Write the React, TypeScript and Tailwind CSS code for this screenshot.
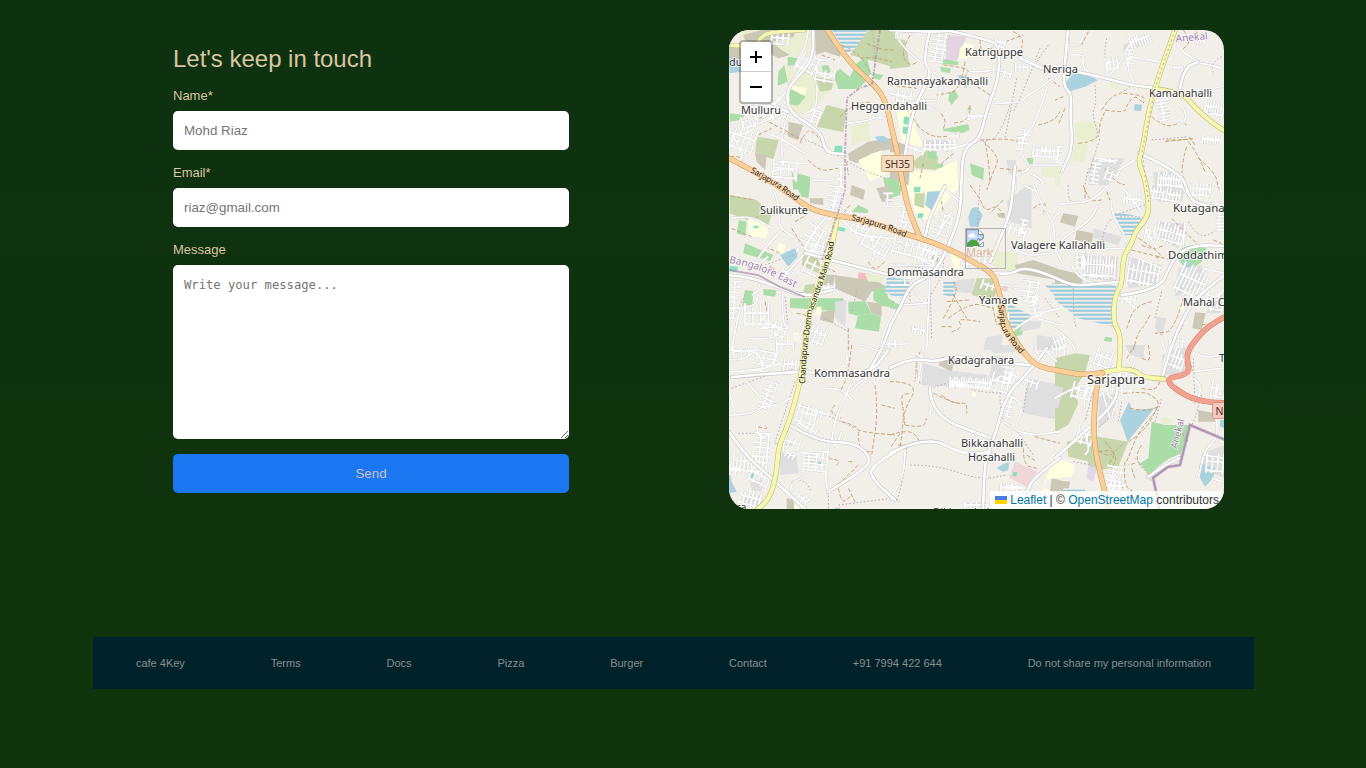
import React from "react";

type Area = [string, string];
type Grid = [number, number, number, number, number, number, number];
type Tile = {
  x: number;
  y: number;
  areas: Area[];
  streets: string[];
  grids: Grid[];
  tracks: string[];
  paths: string[];
};

const WOOD = "#aadda8";
const SCRUB = "#c8d7ab";
const FARM = "#e9efd0";
const YARD = "#cbc8b6";
const WATER = "#aad3df";
const TOWN = "#e0dfdf";
const SCHOOL = "#ffffe0";
const PITCH = "#88e0be";
const WET = "url(#wet)";

// Tile coordinates are three units per map pixel.
const tiles: Tile[] = [
  {
    x: 725, y: 25,
    areas: [
      [FARM, "45,15 260,15 250,95 200,95 150,60 45,60"],
      [YARD, "55,30 110,15 215,15 205,35 140,50 170,75 195,90 160,100 60,45"],
      [YARD, "270,15 300,15 350,70 345,95 300,80 272,90"],
      [WATER, "10,70 45,55 50,140 14,145"],
      [WET, "320,15 425,15 425,50 365,85"],
      [SCRUB, "430,15 510,15 510,128 450,110 375,90"],
      [FARM, "185,120 300,130 330,180 280,240 230,270 190,250"],
      [SCHOOL, "185,180 245,190 240,210 190,205"],
      [WOOD, "160,140 178,120 188,170 158,182"],
      [WOOD, "195,190 242,215 218,242 195,238"],
      [WOOD, "290,122 310,120 318,140 295,148"],
      [WOOD, "325,148 345,132 375,155 395,115 425,95 440,150 400,192 340,192"],
      [WOOD, "448,145 475,150 465,165 445,160"],
      [SCRUB, "270,155 325,165 320,195 285,200"],
      [WOOD, "188,95 222,100 210,120 188,122"],
      [SCRUB, "305,240 365,255 355,322 275,305"],
      [SCRUB, "95,335 162,345 145,402 90,388"],
      [YARD, "190,290 235,300 218,345 190,335"],
      [YARD, "10,60 50,65 55,100 18,110"],
      [WOOD, "14,265 60,270 45,285 14,290"],
      [PITCH, "330,362 352,362 352,383 326,383"],
      [FARM, "378,305 430,290 435,345 380,362"],
      [YARD, "370,385 430,350 505,338 500,372 440,385 395,415 372,405"],
      [SCHOOL, "400,405 470,375 480,450 435,468"],
      [WATER, "448,335 475,332 495,345 465,353"],
      [WOOD, "200,440 255,455 255,485 205,495"],
      [YARD, "90,385 125,390 120,435 95,410"],
      [WOOD, "475,460 510,455 510,480 480,490"],
    ],
    streets: [
      "250,15 245,60 215,110 205,140", "270,90 240,110 190,185", "270,100 300,110 318,100", "270,130 300,165 325,150", "190,190 150,250 90,245",
      "275,180 280,250 240,265", "130,280 190,260", "190,270 165,330 175,420", "90,260 95,300 70,325 20,330", "20,330 60,380 40,420",
      "125,325 160,335 240,385", "160,410 245,415", "140,440 200,420 215,470", "365,295 420,290 450,275 500,285", "435,175 470,215", "260,465 345,470 350,440", "400,140 425,160 440,150",
    ],
    grids: [[165, 42, 50, 40, 5, 4, 4], [250, 115, 50, 60, 30, 4, 4], [95, 280, 90, 40, -20, 5, 3], [50, 340, 80, 80, 20, 6, 5], [180, 435, 70, 60, 5, 4, 3], [265, 280, 40, 50, 20, 3, 4], [300, 150, 55, 45, 10, 3, 3], [135, 235, 70, 70, 35, 4, 4], [350, 455, 25, 60, 0, 2, 4]],
    tracks: ["405,100 440,95 500,110", "425,55 470,75 510,75", "350,60 400,80 440,150", "345,275 380,240 440,230", "100,275 170,310 230,345", "225,355 235,330 260,310 320,390", "250,405 280,440 340,430", "15,395 50,390 50,430", "290,90 330,105", "100,330 140,310", "365,410 370,450"],
    paths: ["165,320 260,345 400,430 480,460", "440,15 455,100 440,180", "90,300 110,260"],
  },
  {
    x: 890, y: 25,
    areas: [
      [SCRUB, "0,40 45,45 60,125 0,132"],
      ["#e3d4e3", "170,30 230,35 200,108 168,105"],
      [SCHOOL, "225,55 250,60 240,95 205,105 210,70"],
      [WOOD, "160,102 205,110 205,120 155,118"],
      [WOOD, "150,125 182,130 180,145 155,140"],
      [WOOD, "178,205 195,195 205,215 185,240 175,225"],
      [WATER, "205,150 235,155 230,190 205,170"],
      [WOOD, "160,312 235,297 238,315 215,325 160,318"],
      [WOOD, "235,245 244,250 242,258 232,254"],
      [SCHOOL, "20,255 60,250 80,320 105,370 35,350"],
      [PITCH, "42,275 58,275 54,300 40,296"],
      [PITCH, "38,305 58,305 56,330 38,325"],
      [YARD, "0,340 45,360 50,390 0,380"],
      [SCRUB, "70,410 110,375 145,395 140,435 75,430"],
      [WOOD, "115,375 140,380 138,405 112,400"],
      [WOOD, "142,415 160,418 160,430 140,430"],
      [SCHOOL, "130,440 200,405 205,495 60,495 60,435"],
      [WOOD, "240,415 282,430 280,465 245,450"],
      [TOWN, "350,405 378,405 376,450 355,445"],
      [WOOD, "412,398 430,400 428,420 408,418"],
      [FARM, "455,430 510,425 510,455 455,455"],
      [YARD, "0,420 60,430 55,480 0,470"],
      [WOOD, "0,460 30,470 20,495 0,495"],
      [TOWN, "100,345 180,345 175,380 95,370"],
    ],
    streets: ["0,205 60,225 140,228", "90,110 30,60 20,20", "130,140 160,160 145,225", "330,65 350,70 345,100", "310,235 395,235 405,215 450,190 500,150", "100,245 140,255", "325,130 300,140 240,140", "95,370 160,380 270,345", "470,190 440,290 400,340", "230,285 290,265 320,270", "420,420 510,420", "400,340 390,390 420,420 410,440 375,445 375,495", "420,445 455,460 465,495", "400,95 460,130 510,120", "150,20 180,15"],
    grids: [[145, 65, 45, 90, 10, 4, 8], [330, 55, 30, 30, 10, 3, 3], [345, 145, 35, 30, 20, 3, 3], [395, 128, 35, 25, 0, 4, 3], [150, 362, 90, 35, 0, 7, 3], [190, 335, 30, 30, 0, 3, 3], [405, 335, 30, 40, 10, 3, 4], [467, 380, 75, 40, 5, 7, 3], [260, 275, 50, 20, 0, 4, 2], [75, 375, 50, 30, 20, 3, 3], [390, 355, 25, 35, 0, 2, 3], [42, 215, 40, 40, 10, 3, 3]],
    tracks: ["60,30 30,85 60,125 90,105", "270,45 270,90 320,60 400,30", "225,110 220,150 200,200 140,210", "160,120 250,130 215,155 300,210", "240,240 240,285 190,295", "270,345 340,340 390,350", "285,350 295,400 300,470", "80,300 120,340 200,330", "50,250 90,310", "100,415 90,460", "190,385 150,420", "290,360 330,395 310,440 290,495", "445,300 490,290 510,260", "0,180 80,190", "330,430 410,440", "160,310 170,290 150,260", "475,160 510,185", "370,20 400,35 395,70"],
    paths: ["475,60 430,125", "380,160 345,340", "360,240 330,340 270,350", "450,70 400,200 370,260"],
  },
  {
    x: 1055, y: 25,
    areas: [
      [WATER, "50,150 75,142 130,165 90,185 40,200 32,172"],
      [WATER, "240,237 262,240 258,258 236,256"],
      [FARM, "60,290 130,290 125,350 60,345"],
      [FARM, "60,350 100,350 90,410 50,410"],
      [TOWN, "205,60 270,25 285,40 250,65 205,85"],
      [TOWN, "110,400 210,400 160,480 100,480"],
      [TOWN, "295,440 375,440 380,495 300,495"],
      [FARM, "165,175 190,178 188,192 168,190"],
      [FARM, "0,425 20,430 15,480 0,480"],
    ],
    streets: ["35,15 45,60 30,120", "45,60 75,65 90,15", "45,90 90,85 80,120 110,150", "160,155 200,110 215,70 250,30", "155,155 160,100", "215,95 220,140 240,180", "225,95 310,110", "370,190 385,130 430,110 500,130", "430,110 385,85 365,55", "130,410 190,405", "190,435 240,405", "385,250 400,280 370,300", "480,190 510,180", "0,410 25,415"],
    grids: [[255, 45, 60, 35, -20, 8, 3], [170, 115, 35, 40, -10, 4, 4], [150, 405, 60, 15, 10, 5, 2], [120, 445, 30, 60, 10, 3, 6], [170, 450, 35, 40, 20, 3, 3], [325, 255, 35, 60, -10, 3, 7], [478, 250, 55, 45, 10, 8, 3], [470, 345, 55, 25, 5, 8, 2], [345, 465, 70, 45, 5, 10, 4], [435, 45, 25, 30, 10, 4, 3], [370, 128, 25, 12, 0, 3, 2], [225, 95, 25, 40, 0, 2, 4], [10, 385, 20, 40, 5, 3, 4]],
    tracks: ["100,20 80,60", "140,255 165,215 200,205 230,180", "150,255 210,265 215,240 240,210 265,235", "205,205 270,210 265,235", "70,355 130,350 135,290 150,260", "290,275 330,310 380,290 395,300", "400,350 430,390 450,440", "395,365 375,430 395,480", "420,360 400,330 405,345 330,345", "385,15 410,50 380,75", "150,430 180,470 210,480", "430,400 480,440 490,490", "425,20 430,60", "25,215 0,225", "30,250 10,300", "330,350 420,340"],
    paths: ["155,40 145,100 160,130", "120,180 125,240 110,260 135,350", "130,355 100,450", "290,345 400,335", "100,430 90,480", "500,95 470,110 475,150"],
  },
  {
    x: 725, y: 185,
    areas: [
      [SCRUB, "14,30 95,45 140,90 130,120 80,110 14,85"],
      [SCHOOL, "70,95 130,120 125,160 70,150"],
      [PITCH, "85,122 100,122 100,130 85,130"],
      [WOOD, "42,105 65,110 60,152 35,145"],
      [WOOD, "60,175 145,210 135,228 55,205"],
      [SCHOOL, "160,175 180,180 175,215 155,200"],
      [WATER, "165,210 210,190 218,215 190,245"],
      [SCRUB, "235,210 280,220 290,270 230,240"],
      [PITCH, "340,125 362,130 358,140 338,136"],
      [PITCH, "14,242 40,245 35,262 14,258"],
      ["#f3c8cc", "135,240 150,250 150,265 125,255"],
      ["#f6bcc3", "400,262 432,266 428,293 398,290"],
      [YARD, "330,270 460,290 490,310 440,320 420,350 330,310"],
      [YARD, "290,268 330,270 325,300 285,300"],
      [YARD, "425,350 470,355 470,395 440,385"],
      [SCRUB, "240,300 275,295 270,335 235,320"],
      [WOOD, "115,312 155,315 150,335 115,330"],
      [WOOD, "60,315 85,318 82,360 52,360"],
      [WOOD, "195,340 355,340 355,380 195,368"],
      [WOOD, "370,350 420,348 440,385 395,392 370,385"],
      [WOOD, "445,320 480,300 490,340 510,350 505,368 470,362 445,345"],
      [WOOD, "398,392 440,385 468,395 462,440 390,430"],
      [YARD, "290,380 330,375 325,415 285,405"],
      [TOWN, "330,350 365,345 360,425 330,400"],
      [SCHOOL, "275,365 290,365 285,390 270,388"],
      [YARD, "380,0 420,15 415,45 375,30"],
      [YARD, "455,10 500,0 500,50 470,50"],
      [WOOD, "400,60 430,75 428,85 380,80"],
      [WOOD, "215,5 255,5 250,40 230,35"],
      [YARD, "255,40 295,40 295,60 255,55"],
      [WOOD, "490,5 510,5 510,35 495,35"],
      [SCHOOL, "205,445 235,440 230,475 205,465"],
      [WET, "485,280 510,275 510,330 480,325"],
      [FARM, "420,265 475,275 470,290 430,290"],
    ],
    streets: ["140,0 165,60 160,130 210,155 220,195", "20,100 75,90 140,130", "160,145 110,200 90,240", "80,250 130,215", "240,205 190,260 170,275", "220,205 250,195 290,210", "105,295 100,320 80,330", "180,285 170,330 175,420 190,430", "20,370 90,370 100,325", "45,370 30,440 20,495", "130,415 185,440 190,415", "105,430 160,425", "325,320 320,310 280,310", "345,0 330,70 280,120 240,190", "345,95 380,140 430,155 510,160", "440,160 450,210 440,230", "510,375 480,430 465,495", "210,450 250,490", "70,460 150,465 150,440"],
    grids: [[330, 55, 50, 100, 10, 6, 8], [260, 160, 55, 75, 30, 4, 5], [405, 130, 50, 40, 20, 4, 4], [455, 175, 80, 60, 30, 5, 4], [285, 185, 50, 40, 15, 4, 3], [185, 265, 30, 30, 30, 3, 3], [30, 345, 30, 110, 3, 2, 8], [95, 390, 70, 70, 0, 4, 4], [145, 425, 80, 40, 30, 5, 2], [265, 445, 70, 60, 20, 6, 4], [265, 245, 50, 60, 25, 3, 3], [300, 310, 55, 35, 5, 4, 3], [490, 45, 30, 40, 0, 2, 3], [180, 480, 50, 30, 0, 4, 2]],
    tracks: ["0,30 90,45", "90,100 140,70 200,90", "210,110 250,90 260,60", "200,130 260,230 330,260", "120,185 165,205", "430,230 445,260 480,230", "375,60 350,90", "370,430 370,495", "215,385 260,390 260,440", "120,350 140,440", "360,240 430,250", "20,130 80,155"],
    paths: ["180,335 190,430", "65,320 40,370", "300,400 370,440", "120,240 260,190", "395,320 380,380"],
  },
  {
    x: 890, y: 185,
    areas: [
      [SCHOOL, "50,0 205,0 200,15 115,110 75,80"],
      [WOOD, "0,0 35,0 30,30 0,40"],
      [SCRUB, "75,25 105,25 102,70 72,60"],
      [PITCH, "72,5 92,5 90,22 72,22"],
      [PITCH, "84,85 102,85 96,100 82,98"],
      [WATER, "112,20 150,18 130,80 105,60"],
      [WATER, "245,70 260,65 278,90 265,125 240,125 235,95"],
      [TOWN, "350,50 410,0 425,0 425,130 360,110"],
      [WET, "0,278 70,285 40,340 0,330"],
      [WET, "160,290 205,290 190,335 160,330"],
      [FARM, "275,195 385,205 380,260 320,255"],
      [YARD, "375,240 430,225 500,250 500,285 380,265"],
      [TOWN, "200,285 255,280 250,325 190,320"],
      [SCRUB, "260,280 305,280 325,325 300,345 245,330"],
      ["#eed0ca", "340,300 355,305 350,320 330,315"],
      [WET, "355,355 430,395 370,445 350,390"],
      [WOOD, "375,425 405,425 395,450 370,455"],
      [TOWN, "400,405 455,410 450,430 390,440"],
      [TOWN, "440,450 510,460 510,495 440,495"],
      [WET, "465,300 510,290 510,350"],
      [WOOD, "0,348 35,360 30,375 0,370"],
      [WOOD, "110,190 145,205 145,235 125,220"],
      [SCHOOL, "180,205 215,215 215,260 195,255"],
      [TOWN, "290,455 340,450 330,495 280,495"],
      [YARD, "320,85 345,85 345,100 325,97"],
    ],
    streets: ["160,10 200,40 215,60", "60,100 30,150", "185,80 130,170", "60,290 100,360 120,350", "120,270 110,495", "0,300 60,300", "40,360 110,355", "430,0 460,70 490,110 495,180", "495,95 510,80", "360,180 400,215 480,205", "330,300 360,300 390,320", "365,440 430,390 510,370", "340,385 310,360", "400,0 440,20", "510,420 440,400", "0,240 120,240 150,250", "140,240 190,190", "235,240 270,230"],
    grids: [[40, 95, 25, 60, 10, 3, 5], [75, 190, 130, 65, 15, 8, 4], [160, 120, 50, 60, 20, 3, 4], [125, 210, 60, 70, 25, 5, 5], [85, 275, 85, 35, -10, 6, 3], [375, 135, 65, 35, 20, 5, 3], [400, 125, 25, 40, 10, 2, 4], [420, 320, 55, 60, 10, 4, 5], [435, 365, 30, 60, -10, 2, 6], [85, 435, 35, 20, 10, 5, 3], [240, 235, 50, 20, 0, 4, 2], [300, 305, 50, 30, 20, 4, 3], [285, 215, 35, 40, 0, 3, 3], [340, 400, 30, 40, 0, 3, 3]],
    tracks: ["240,0 270,40 285,80 320,60 340,90", "340,45 300,85", "160,400 205,320 190,290", "175,400 240,350 310,370", "185,440 220,430 200,400 270,410", "430,70 470,40 460,90", "170,350 240,345", "300,330 320,420", "190,330 230,400", "150,30 160,80", "155,425 190,425"],
    paths: ["270,0 260,120 270,180", "160,210 165,260 110,350", "120,300 125,460", "465,340 510,400", "60,320 60,360", "30,240 100,250"],
  },
  {
    x: 1055, y: 185,
    areas: [
      [WET, "170,80 230,90 270,105 235,150 200,150"],
      [YARD, "25,85 70,92 60,125 15,112"],
      [YARD, "65,135 115,145 110,175 60,165"],
      [TOWN, "115,130 200,155 190,180 115,160"],
      [YARD, "0,250 85,270 80,300 0,295"],
      [WET, "0,300 185,295 175,425 70,400 0,345"],
      [TOWN, "60,210 190,215 185,290 90,280"],
      [TOWN, "220,215 320,240 300,300 220,310"],
      [WOOD, "380,190 410,180 455,190 440,230 400,260 370,225"],
      [WATER, "380,225 410,235 395,258"],
      [TOWN, "370,250 440,240 450,300 360,335"],
      [TOWN, "305,110 390,115 370,190 310,160"],
      [YARD, "420,382 452,385 440,435 412,430"],
      [TOWN, "305,395 335,400 320,455 300,430"],
      [SCHOOL, "370,365 388,362 385,378 370,375"],
      [WOOD, "150,455 172,458 170,470 146,468"],
      [TOWN, "285,0 390,0 380,50 310,50"],
      [TOWN, "475,330 510,330 510,385 455,385"],
    ],
    streets: ["0,60 30,55 110,50 160,0", "130,50 120,100 20,160 0,200", "170,50 165,80 215,160 215,190", "0,190 20,230", "205,10 260,80", "140,190 210,190", "50,240 70,290 190,300", "270,130 285,160 305,190", "250,220 320,250", "225,285 290,300", "200,330 240,370", "445,250 510,265", "0,430 50,470 60,495", "440,320 480,345 510,310", "330,495 320,470", "390,110 385,185", "380,0 400,50 510,60", "495,0 500,30"],
    grids: [[235, 45, 55, 30, 5, 7, 2], [330, 28, 90, 40, 10, 10, 3], [435, 15, 60, 40, 5, 7, 3], [285, 140, 25, 45, 10, 3, 3], [345, 145, 80, 60, 15, 9, 4], [130, 245, 100, 70, 3, 12, 3], [265, 265, 90, 75, 10, 8, 4], [215, 345, 50, 35, 5, 5, 4], [410, 290, 80, 95, 25, 8, 7], [480, 350, 50, 60, 10, 4, 4], [15, 470, 30, 45, -20, 4, 4], [370, 470, 50, 35, 5, 5, 3], [70, 225, 40, 50, 0, 3, 4], [405, 65, 30, 20, 0, 3, 2], [495, 110, 25, 50, 0, 2, 6]],
    tracks: ["85,0 100,50 140,45", "90,10 90,55", "230,195 350,225", "235,150 330,210 300,220", "285,390 270,420 250,440 235,495", "290,350 240,360 215,430", "350,100 430,180", "390,320 360,440 300,445", "440,420 500,410", "260,180 290,195 330,180", "475,165 500,175", "155,20 165,45", "355,20 365,60"],
    paths: ["40,0 35,60 100,50", "140,190 145,110 210,90 280,100", "55,310 55,400 65,430", "385,420 345,490", "320,320 300,400", "270,60 180,90", "90,180 90,260", "400,110 430,160 480,140"],
  },
  {
    x: 725, y: 345,
    areas: [
      [TOWN, "165,320 215,330 220,385 165,390"],
      [TOWN, "75,410 120,400 110,440 80,435"],
      [PITCH, "78,378 88,378 86,400 78,400"],
      [WATER, "12,370 20,410 35,440 12,445"],
      [YARD, "185,460 208,460 208,492 185,492"],
      [SCHOOL, "208,465 225,470 222,492 208,492"],
      [TOWN, "55,450 110,450 100,490 50,480"],
      [WOOD, "250,340 265,342 260,360 248,355"],
      [PITCH, "270,350 290,350 290,360 270,362"],
      [WATER, "330,488 345,488 345,492 328,492"],
    ],
    streets: ["15,15 100,15 110,60", "15,45 60,45 90,15", "155,0 160,40 120,70", "15,80 100,75 170,55", "15,210 70,210 110,185 160,180 195,160", "60,105 100,150", "15,150 30,210", "220,180 310,210", "95,240 100,280 130,270", "180,250 175,320", "365,30 370,60 350,65", "300,130 340,130 370,150 380,165", "380,110 365,150 330,220 320,290", "350,260 340,290", "470,0 440,60 450,120", "235,310 240,400 200,410 195,450", "310,310 300,400 310,440", "340,310 320,290", "375,140 400,110 440,95", "410,0 480,25"],
    grids: [[120, 50, 70, 60, 10, 3, 4], [195, 60, 35, 35, 5, 4, 4], [130, 150, 40, 80, 20, 3, 7], [245, 210, 55, 60, 15, 5, 5], [290, 205, 40, 30, 15, 3, 3], [110, 300, 50, 70, 5, 4, 6], [75, 355, 100, 60, 5, 10, 4], [105, 395, 60, 50, 25, 5, 3], [255, 350, 50, 50, 5, 4, 6], [295, 350, 30, 60, 5, 2, 4], [315, 290, 35, 25, 0, 4, 3], [75, 460, 60, 50, 15, 6, 3], [200, 295, 45, 35, 20, 4, 3], [225, 460, 45, 40, 40, 4, 2], [30, 375, 30, 30, 0, 3, 3], [245, 250, 60, 40, 30, 5, 3], [60, 20, 70, 35, -5, 4, 3], [195, 330, 25, 25, 30, 3, 2]],
    tracks: ["100,245 130,255 120,240", "380,0 370,90 345,140", "450,120 460,200 440,330", "350,230 390,240 400,260 510,270", "330,180 310,200 350,220", "310,440 350,410 400,360", "310,340 350,345 330,365", "370,350 390,350", "340,430 350,480 380,450", "400,260 400,320 440,320", "470,180 510,190", "370,430 390,470"],
    paths: ["20,130 150,80 250,70", "210,110 180,200 150,290", "150,295 200,300", "200,410 235,400 260,440", "310,430 310,490", "40,265 100,265", "230,180 340,225 390,250", "340,480 500,460"],
  },
  {
    x: 890, y: 345,
    areas: [
      [TOWN, "100,55 170,75 290,90 300,130 190,125 95,120"],
      [YARD, "155,35 195,40 185,80 145,60"],
      [TOWN, "290,0 380,0 375,20 310,25"],
      [TOWN, "310,30 350,40 340,100 290,130 300,80"],
      [TOWN, "415,100 510,120 510,225 400,205 405,150"],
      ["#f0d6d6", "375,350 442,380 410,425 358,398"],
      [WATER, "325,365 345,355 358,350 355,375 340,380 320,370"],
      [SCHOOL, "490,330 510,325 510,400 465,405 460,430 510,440 455,450"],
      [YARD, "485,400 510,405 510,445 480,440"],
      [SCHOOL, "248,140 258,142 256,155 246,155"],
      [SCRUB, "500,170 510,170 510,250 495,240"],
      [PITCH, "370,380 382,382 378,395 368,392"],
      [WOOD, "480,0 510,0 510,15 490,10"],
    ],
    streets: ["100,0 95,50 85,110", "120,130 125,170 120,210", "180,120 300,130", "440,0 430,30 480,20", "350,145 380,165 400,180 380,240", "340,230 400,275 510,260", "0,465 40,400 45,320", "300,350 290,400", "350,420 410,430", "15,460 0,480", "220,485 260,475 300,490", "310,110 330,85 360,110", "470,20 500,50", "75,25 100,40"],
    grids: [[240, 115, 120, 35, 3, 18, 2], [330, 115, 50, 60, 15, 4, 4], [400, 105, 90, 30, 20, 6, 3], [360, 185, 30, 60, 15, 3, 5], [365, 430, 65, 30, 5, 5, 3], [300, 310, 30, 30, 0, 3, 4], [260, 480, 70, 20, 0, 5, 2], [350, 90, 40, 45, 10, 3, 4], [15, 0, 70, 30, 0, 5, 2], [205, 120, 50, 20, 0, 6, 2]],
    tracks: ["0,110 90,110 40,200 45,240", "30,305 45,210 30,150 60,145", "45,240 100,250 110,220", "130,145 200,180 230,170 230,205", "0,270 60,250 90,290", "25,300 45,300", "400,310 400,360 440,370", "370,290 410,300", "435,275 510,295", "90,20 75,60 90,115", "30,265 0,310", "155,150 180,170 210,175", "410,330 440,350"],
    paths: ["80,30 75,110", "330,140 330,230 370,240 430,330", "60,360 140,360 270,405 350,390", "180,110 250,140 350,145", "50,310 45,380 20,470", "410,130 400,200", "0,450 30,470", "120,130 170,115"],
  },
  {
    x: 1055, y: 345,
    areas: [
      [SCRUB, "0,40 60,25 105,30 90,85 60,130 70,175 40,240 0,260"],
      [TOWN, "0,120 25,130 10,190 0,190"],
      [SCRUB, "100,270 220,290 190,365 100,380"],
      [SCRUB, "35,290 110,275 105,350 40,335"],
      [WATER, "222,170 232,195 298,190 250,250 218,290 195,225"],
      [WOOD, "290,230 330,240 405,240 370,350 350,345 285,395 255,355 280,340"],
      [SCHOOL, "0,335 60,360 50,395 0,400"],
      [YARD, "0,405 45,410 40,440 0,440"],
      ["#e3d8e8", "100,360 125,370 115,410 95,400"],
      [FARM, "320,215 350,220 345,240 315,235"],
      [YARD, "430,195 480,205 480,230 430,230"],
      [TOWN, "440,325 510,300 510,400 440,370"],
      [WATER, "435,355 480,370 475,400 450,425 430,390"],
      [TOWN, "210,0 270,0 265,40 225,30"],
      [TOWN, "130,155 185,145 180,210 130,250"],
      [WATER, "495,225 510,225 510,250 495,245"],
      [WET, "25,430 90,430 90,445 25,445"],
      [TOWN, "320,30 400,0 400,95 330,90"],
    ],
    streets: ["100,130 85,160 90,200", "160,110 150,150 190,170", "185,180 165,215 185,235", "0,160 50,130 100,120", "170,60 200,100 200,150", "230,70 240,50", "415,80 500,70", "350,0 320,80", "410,20 450,40 500,30", "415,100 440,120 430,160", "495,110 480,160", "360,130 370,150", "485,220 490,280 450,310 430,400", "445,330 510,340", "470,400 500,410", "90,260 105,310 90,330", "140,400 190,390 170,440", "280,395 330,350 375,330", "140,130 165,220"],
    grids: [[145, 40, 45, 60, 20, 4, 4], [165, 110, 130, 60, 5, 8, 4], [80, 140, 55, 50, 15, 4, 4], [90, 270, 45, 60, 15, 4, 4], [360, 40, 55, 60, 20, 6, 4], [490, 135, 40, 55, 10, 4, 4], [175, 400, 50, 70, 10, 4, 6], [480, 355, 50, 60, 5, 4, 4], [10, 15, 35, 30, 0, 4, 3], [225, 85, 60, 30, 0, 4, 3], [180, 425, 60, 30, 0, 5, 2], [365, 130, 20, 25, 30, 2, 2]],
    tracks: ["205,145 260,140 290,150 320,180 250,260 215,350", "225,190 270,200 310,185", "220,290 270,260 310,180", "260,300 240,330 260,370", "210,350 205,420 235,440", "230,370 240,400", "240,355 220,360", "110,290 150,350 210,290", "150,290 190,330 170,370", "280,0 290,50 260,40", "130,320 190,310 160,360", "400,40 415,80", "260,130 300,140 320,100", "370,250 400,290", "210,420 190,440", "240,0 215,40"],
    paths: ["130,80 90,230", "55,350 110,360", "240,340 260,360 290,410", "440,150 420,220 410,240", "200,170 190,230", "160,220 130,250", "415,40 420,180", "300,230 320,160"],
  },
];

const whiteRoads = [
  "813,30 815,55 800,75 787,88 788,112 822,132 825,153 845,154",
  "950,31 990,40 1000,47 998,82 987,108 980,140 963,148 961,190 960,215 947,250 933,275 910,285 900,308 890,325 884,345 868,373",
  "890,30 930,32 950,31", "930,30 922,62 933,72 913,108 905,155",
  "1068,30 1065,62 1063,85 1072,95 1070,112 1073,148 1062,171",
  "1015,166 1013,190 1010,215 993,255 990,262",
  "1020,58 1042,69 1058,72", "1078,72 1105,78 1130,85 1155,88", "1180,88 1184,68 1198,62",
  "1139,153 1182,173 1187,192 1195,204 1225,208",
  "1122,295 1160,290 1170,265 1182,250 1200,245 1225,246",
  "1225,275 1198,295 1183,318 1170,350 1162,378",
  "725,275 745,276 775,286 805,297 832,290", "805,253 842,263 890,275",
  "729,432 745,455 768,475 805,509",
  "790,425 818,442 852,442 870,455 868,467 828,492",
  "895,452 868,467 875,482 895,500",
  "732,377 800,371 812,373 870,375 888,350", "890,368 910,358 937,362 957,355 983,362 1030,365",
  "890,453 927,435 963,455 990,452", "1047,348 1027,375 1007,393 993,442 985,458 983,509",
  "930,388 930,415 990,438", "1060,458 1033,478 1027,492",
  "1055,458 1085,432 1115,403 1118,385",
  "993,273 1010,275 1023,267 1050,275 1070,285 1085,285 1118,282",
  "1148,477 1165,465 1180,458",
  "788,112 775,105 745,108", "945,186 930,215 925,238",
];

const orangeRoads = [
  "725,156 752,170 775,184 795,198 812,210 838,216 865,220 895,231 920,238 947,248 970,260 993,273 998,288 1003,308 1005,322 1018,345 1035,366 1060,371 1082,375 1102,373",
  "1102,373 1097,382 1094,412 1094,448 1105,492 1108,510",
  "827,29 845,58 872,83 885,98 892,130 897,150 903,185 908,208 920,238",
];
const yellowRoads = [
  "1175,30 1165,58 1155,88 1148,115 1142,152 1138,162 1145,178 1149,205 1147,218 1135,232 1132,243 1123,257 1122,285 1115,295 1113,322 1121,335 1119,368",
  "1100,373 1118,369 1135,370 1142,377 1164,379",
  "1155,89 1182,92 1195,108 1215,125 1225,131",
  "837,217 833,245 822,278 810,308 805,345 800,385 788,425 778,448 777,472 770,498 757,510",
];
const redRoads = ["1228,315 1215,322 1202,332 1188,350 1187,360 1190,374 1163,379 1185,396 1205,402 1226,403"];

type Label = [string, number, number, number, number?];
const labels: Label[] = [
  ["Katriguppe", 965, 56, 58], ["Neriga", 1043, 73, 35], ["Ramanayakanahalli", 887, 85, 101],
  ["Heggondahalli", 851, 110, 76], ["Kamanahalli", 1149, 97, 63], ["Mulluru", 741, 114, 40],
  ["Sulikunte", 760, 214, 48], ["Kutaganahalli", 1173, 212, 74], ["Valagere Kallahalli", 1011, 249, 94],
  ["Doddathimmanahalli", 1168, 259, 112], ["Dommasandra", 887, 276, 77], ["Yamare", 979, 304, 39],
  ["Mahal Chowdadenahalli", 1183, 306, 124], ["Kadagrahara", 948, 364, 66], ["Kommasandra", 814, 377, 76],
  ["Sarjapura", 1087, 384, 58, 13], ["Bikkanahalli", 961, 447, 62], ["Hosahalli", 968, 461, 47],
];

// Rounds the corners of a point list by curving through segment midpoints.
function smooth(points: string) {
  const p = points.split(" ").map((s) => s.split(",").map(Number));
  let d = `M${p[0][0]} ${p[0][1]}`;
  for (let i = 1; i < p.length - 1; i++) {
    const mx = (p[i][0] + p[i + 1][0]) / 2;
    const my = (p[i][1] + p[i + 1][1]) / 2;
    d += `Q${p[i][0]} ${p[i][1]} ${mx} ${my}`;
  }
  const last = p[p.length - 1];
  return `${d}L${last[0]} ${last[1]}`;
}

function Streets({ g }: { g: Grid }) {
  const [cx, cy, w, h, a, nx, ny] = g;
  const across = nx >= ny;
  let d = "";
  const n = across ? nx : ny;
  const long = across ? h : w;
  const span = across ? w : h;
  for (let i = 0; i < n; i++) {
    const s = -span / 2 + (n > 1 ? (span * i) / (n - 1) : 0);
    const from = -long / 2 + (i % 3 === 1 ? long * 0.18 : 0);
    const to = long / 2 - (i % 4 === 2 ? long * 0.22 : 0);
    d += across ? `M${s} ${from}V${to}` : `M${from} ${s}H${to}`;
  }
  const cross = [-0.08 * long, long > 38 ? 0.38 * long : -0.08 * long];
  cross.forEach((c) => {
    d += across ? `M${-span / 2} ${c}H${span / 2}` : `M${c} ${-span / 2}V${span / 2}`;
  });
  return <path d={d} transform={`translate(${cx} ${cy}) rotate(${a})`} />;
}

function Road({ pts, w, fill, edge }: { pts: string[]; w: number; fill: string; edge: string }) {
  return (
    <g fill="none" strokeLinejoin="round" strokeLinecap="round">
      {pts.map((p) => <path key={p} d={smooth(p)} stroke={edge} strokeWidth={w + 1.1} />)}
      {pts.map((p) => <path key={p} d={smooth(p)} stroke={fill} strokeWidth={w} />)}
    </g>
  );
}

const at = (t: Tile) => `translate(${t.x} ${t.y}) scale(0.33333)`;
const halo = { paintOrder: "stroke" as const };

function MapDrawing() {
  return (
    <svg viewBox="729 30 495 479" className="block h-full w-full font-['Noto_Sans',sans-serif]">
      <defs>
        <pattern id="wet" width="12" height="12" patternUnits="userSpaceOnUse">
          <rect width="12" height="12" fill="#f2efe9" />
          <rect width="12" height="6.5" y="2" fill="#9bcbdc" />
        </pattern>
        <path id="sarj1" d="M750 172L775 186L796 201L812 210" />
        <path id="sarj2" d="M851 220L868 224L890 231L912 240" />
        <path id="sarj3" d="M998 305L1001 327Q1005 338 1025 359" />
        <path id="chand" d="M805 384L807 350L812 313L824 280L832 255L835 237" />
        <path id="bang" d="M729 263Q764 268 800 291" />
        <path id="ane" d="M1177 449L1186 414" />
      </defs>
      <rect x="729" y="30" width="495" height="479" fill="#f2efe9" />
      {tiles.map((t, i) => (
        <g key={i} transform={at(t)}>
          {t.areas.map(([c, p], j) => <polygon key={j} points={p} fill={c} />)}
        </g>
      ))}
      {tiles.map((t, i) => (
        <g key={i} transform={at(t)} fill="none">
          <g stroke="#c3a16e" strokeWidth="2.8" strokeDasharray="12 6">
            {t.tracks.map((p, j) => <path key={j} d={smooth(p)} />)}
          </g>
          <g stroke="#b9a9b7" strokeWidth="3" strokeDasharray="5 6">
            {t.paths.map((p, j) => <path key={j} d={smooth(p)} />)}
          </g>
        </g>
      ))}
      {tiles.map((t, i) => (
        <g key={i} transform={at(t)} fill="none" stroke="#d0cccc" strokeWidth="7.4">
          {t.streets.map((p, j) => <path key={j} d={smooth(p)} strokeLinejoin="round" />)}
          {t.grids.map((g, j) => <Streets key={j} g={g} />)}
        </g>
      ))}
      {tiles.map((t, i) => (
        <g key={i} transform={at(t)} fill="none" stroke="#fff" strokeWidth="5">
          {t.streets.map((p, j) => <path key={j} d={smooth(p)} strokeLinejoin="round" />)}
          {t.grids.map((g, j) => <Streets key={j} g={g} />)}
        </g>
      ))}
      <Road pts={whiteRoads} w={2.6} fill="#ffffff" edge="#c2bebe" />
      <Road pts={["758,42 762,35 775,32 805,30", "729,45 741,46"]} w={3.4} fill="#f4f7b4" edge="#c1c18a" />
      <Road pts={yellowRoads} w={4.2} fill="#f5f8ae" edge="#bcbf7c" />
      <Road pts={redRoads} w={4.6} fill="#f0a28f" edge="#d9806f" />
      <Road pts={orangeRoads} w={4.4} fill="#fbcf98" edge="#cd9a63" />
      <g fill="none" stroke="#a98aae">
        <polyline points="1230,442 1190,425 1180,465 1168,467 1153,478 1158,500 1159,510" strokeWidth="3.4" opacity=".35" />
        <polyline points="1230,442 1190,425 1180,465 1168,467 1153,478 1158,500 1159,510" strokeWidth="2" opacity=".85" />
        <polyline points="880,30 872,84 860,88 847,98 845,155 845,190 837,216 822,260" strokeWidth="1.8" strokeDasharray="4 1.5 1.5 1.5" opacity=".7" />
        <polyline points="729,270 758,275 780,287 805,297" strokeWidth="1.8" opacity=".7" />
        <polyline points="1175,30 1155,88 1142,152 1149,205" strokeWidth="1" strokeDasharray="2 3" opacity=".7" />
      </g>
      <rect x="881.5" y="155.500" width="32" height="16" rx="1.5" fill="#f6dcc0" stroke="#c99a70" strokeWidth=".7" />
      <text x="885" y="168" fontSize="10.500" fill="#4a3525" textLength="25">SH35</text>
      <rect x="1212.500" y="402.500" width="20" height="16" rx="2" fill="#f4c9c0" stroke="#c77d71" strokeWidth=".7" />
      <text x="1215.500" y="414.500" fontSize="10.500" fill="#5c2f29">NH648</text>
      <g stroke="#fff" strokeWidth="2.2" strokeOpacity=".75" strokeLinejoin="round" fill="#333" style={halo}>
        {labels.map(([s, x, y, w, f]) => (
          <text key={s} x={x} y={y} fontSize={f ?? 11} textLength={w} lengthAdjust="spacingAndGlyphs">{s}</text>
        ))}
        <text x="729" y="66" fontSize="11">du</text>
        <text x="1219" y="362" fontSize="11">T</text>
        <text x="736" y="511" fontSize="11">ra</text>
        <text x="933" y="516" fontSize="11">Bikkanahalli</text>
      </g>
      <g fill="#222" fontSize="8.400" stroke="#fbd9ac" strokeWidth="1.5" style={halo}>
        <text><textPath href="#sarj1" textLength="55">Sarjapura Road</textPath></text>
        <text><textPath href="#sarj2" textLength="57">Sarjapura Road</textPath></text>
        <text><textPath href="#sarj3" textLength="56">Sarjapura Road</textPath></text>
        <text stroke="#f5f8bc"><textPath href="#chand" textLength="146">Chandapura-Dommasandra Main Road</textPath></text>
      </g>
      <g fill="#a27fab" fontSize="10" stroke="#fff" strokeWidth="1.5" strokeOpacity=".7" style={halo}>
        <text><textPath href="#bang">Bangalore East</textPath></text>
        <text fontSize="9.500"><textPath href="#ane">Anekal</textPath></text>
        <text x="1176" y="42" transform="rotate(-5 1176 42)" textLength="32">Anekal</text>
      </g>
    </svg>
  );
}

function BrokenImage() {
  return (
    <svg viewBox="0 0 16 16" className="block size-[18px]">
      <path d="M.5 .5H11L15.500 5V8L13 10L11 8.500L8 13L6 15.500H.5Z" fill="#c3d9f5" stroke="#8795a8" />
      <path d="M2 6.500a2 2 0 0 1 2-2a2.500 2.500 0 0 1 4 1a1.500 1.500 0 0 1 0 2H3Z" fill="#fff" />
      <path d="M1 15V12.500L4 10Q7 8 11 12L12 15Z" fill="#4ba13c" />
      <path d="M11 .5V5H15.500" fill="#fff" stroke="#8795a8" />
      <path d="M11 15.500L15.500 11.500V15.500Z" fill="#fff" stroke="#8795a8" strokeWidth=".8" />
    </svg>
  );
}

const field =
  "block w-full rounded-[5px] bg-white px-[11px] text-[13.333px] text-gray-800 outline-none placeholder:text-[#757575]";
const links = ["cafe 4Key", "Terms", "Docs", "Pizza", "Burger", "Contact", "+91 7994 422 644", "Do not share my personal information"];

export default function App() {
  return (
    <div className="flex h-screen flex-col overflow-hidden bg-[#0f330f] bg-linear-to-b from-[#0e3110] to-[#10340b] pt-[30px] font-['Liberation_Sans',Arial,sans-serif]">
      <main className="flex h-[479px] shrink-0 justify-between pr-[142px] pl-[173px]">
        <form className="flex w-[396px] flex-col pt-[14px] text-[13px] text-[#dac5a2]" onSubmit={(e) => e.preventDefault()}>
          <h1 className="text-[24px] leading-[30px] tracking-[-0.02px]">Let's keep in touch</h1>
          <label className="mt-[14px] flex flex-col gap-[7px]">
            <span className="leading-4">Name*</span>
            <input className={`${field} h-[39px]`} placeholder="Mohd Riaz" />
          </label>
          <label className="mt-[15px] flex flex-col gap-[7px]">
            <span className="leading-4">Email*</span>
            <input className={`${field} h-[39px]`} placeholder="riaz@gmail.com" />
          </label>
          <label className="mt-[15px] flex flex-col gap-[7px]">
            <span className="leading-4">Message</span>
            <textarea
              className="block h-[174px] w-full resize rounded-[5px] bg-white px-[11px] py-3 font-['DejaVu_Sans_Mono',monospace] text-[12.18px] leading-4 text-gray-800 outline-none placeholder:text-[#757575]"
              placeholder="Write your message..."
            />
          </label>
          <button className="mt-[15px] h-[39px] shrink-0 rounded-[5px] bg-[#1b76f2] text-[13.333px] text-[#c9c3c0]">Send</button>
        </form>

        <section className="relative w-[495px] overflow-hidden rounded-[20px]">
          <MapDrawing />
          <div className="absolute top-[198px] left-[236px] h-[41px] w-[41px] overflow-hidden border border-[#b4b4b4] text-[12px] leading-[13px] text-[#dfb79f]">
            <BrokenImage />
            <span className="block">Mark</span>
          </div>
          <div className="absolute top-[10px] left-[10px] flex w-[34px] flex-col overflow-hidden rounded-[4px] border-2 border-black/25 bg-white bg-clip-padding text-black">
            <button className="flex h-[30px] items-center justify-center border-b border-[#ccc]" aria-label="Zoom in">
              <svg viewBox="0 0 12 12" className="size-3"><path d="M0 6H12M6 0V12" stroke="currentColor" strokeWidth="2" /></svg>
            </button>
            <button className="flex h-[30px] items-center justify-center" aria-label="Zoom out">
              <svg viewBox="0 0 12 12" className="size-3"><path d="M0 6H12" stroke="currentColor" strokeWidth="2" /></svg>
            </button>
          </div>
          <div className="absolute right-0 bottom-0 flex h-[18px] items-center bg-white/80 px-[5px] text-[12px] whitespace-pre text-[#333]">
            <svg viewBox="0 0 12 8" className="mr-[3px] h-2 w-3"><path fill="#4C7BE1" d="M0 0h12v4H0z" /><path fill="#FFD500" d="M0 4h12v4H0z" /></svg>
            <a className="text-[#0078a8]">Leaflet</a>
            <span> | © </span>
            <a className="text-[#0078a8]">OpenStreetMap</a>
            <span> contributors</span>
          </div>
        </section>
      </main>

      <footer className="mt-32 ml-[93px] flex h-[52px] w-[1161px] shrink-0 items-center justify-around bg-[#02222b] text-[11px] text-[#8b8d8b]">
        {links.map((l) => <a key={l}>{l}</a>)}
      </footer>
    </div>
  );
}
